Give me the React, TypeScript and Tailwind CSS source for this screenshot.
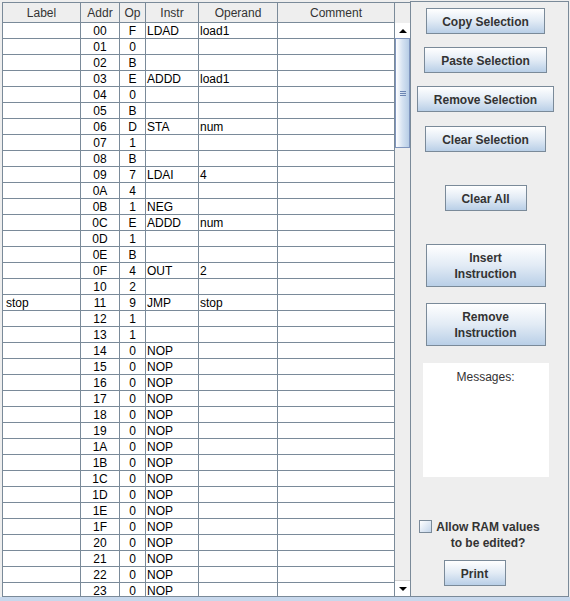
import React from 'react';

type Row = { label?: string; addr: string; op: string; instr?: string; operand?: string };

const rows: Row[] = [
  { addr: '00', op: 'F', instr: 'LDAD', operand: 'load1' },
  { addr: '01', op: '0' },
  { addr: '02', op: 'B' },
  { addr: '03', op: 'E', instr: 'ADDD', operand: 'load1' },
  { addr: '04', op: '0' },
  { addr: '05', op: 'B' },
  { addr: '06', op: 'D', instr: 'STA', operand: 'num' },
  { addr: '07', op: '1' },
  { addr: '08', op: 'B' },
  { addr: '09', op: '7', instr: 'LDAI', operand: '4' },
  { addr: '0A', op: '4' },
  { addr: '0B', op: '1', instr: 'NEG' },
  { addr: '0C', op: 'E', instr: 'ADDD', operand: 'num' },
  { addr: '0D', op: '1' },
  { addr: '0E', op: 'B' },
  { addr: '0F', op: '4', instr: 'OUT', operand: '2' },
  { addr: '10', op: '2' },
  { label: 'stop', addr: '11', op: '9', instr: 'JMP', operand: 'stop' },
  { addr: '12', op: '1' },
  { addr: '13', op: '1' },
  ...Array.from({ length: 16 }, (_, i) => ({
    addr: (0x14 + i).toString(16).toUpperCase(),
    op: '0',
    instr: 'NOP',
  })),
];

const cell = 'h-[16px] border-r border-b border-[#7a8a99] leading-[17px] whitespace-nowrap overflow-hidden';

function Btn({ w, children, tall }: { w: string; children: React.ReactNode; tall?: boolean }) {
  return (
    <button
      className={`${w} ${tall ? 'h-[43px] leading-[16px] pt-[1px]' : 'h-[26px] pt-[1px]'} border border-[#7a8a99] bg-linear-to-b from-white via-[#e2ebf5] to-[#b9cfe7] text-[12px] font-bold text-[#333333] text-center`}
    >
      {children}
    </button>
  );
}

function Arrow({ up }: { up?: boolean }) {
  return (
    <svg width="8" height="4" viewBox="0 0 8 4">
      {up ? <polygon points="0,4 8,4 4,0" fill="#000" /> : <polygon points="0,0 8,0 4,4" fill="#000" />}
    </svg>
  );
}

export default function App() {
  return (
    <div
      className="w-[570px] h-[601px] bg-[#eeeeee] flex flex-col overflow-hidden text-black"
      style={{ fontFamily: '"Liberation Sans", Arial, sans-serif' }}
    >
      <div className="flex h-[597px] pt-[1px] pl-[2px]">
        {/* table pane */}
        <div className="w-[408px] mt-[1px] border-l border-t border-b border-[#7a8a99] flex bg-white">
          <div className="w-[392px] flex flex-col">
            <div className="flex h-[20px] bg-[#eeeeee] text-[12px] text-[#333333] shrink-0">
              {[
                ['Label', 'w-[78px]'],
                ['Addr', 'w-[39px]'],
                ['Op', 'w-[26px]'],
                ['Instr', 'w-[53px]'],
                ['Operand', 'w-[79px]'],
                ['Comment', 'w-[117px]'],
              ].map(([t, w]) => (
                <div key={t} className={`${w} border-r border-b border-[#7a8a99] text-center leading-[21px]`}>
                  {t}
                </div>
              ))}
            </div>
            <div className="flex-1 overflow-hidden text-[12px]">
              {rows.map((r) => (
                <div key={r.addr} className="flex">
                  <div className={`${cell} w-[78px] pl-[3px]`}>{r.label}</div>
                  <div className={`${cell} w-[39px] text-center`}>{r.addr}</div>
                  <div className={`${cell} w-[26px] text-center`}>{r.op}</div>
                  <div className={`${cell} w-[53px] pl-[1px]`}>{r.instr}</div>
                  <div className={`${cell} w-[79px] pl-[1px]`}>{r.operand}</div>
                  <div className={`${cell} w-[117px]`}></div>
                </div>
              ))}
            </div>
          </div>
          {/* scrollbar */}
          <div className="w-[15px] flex flex-col bg-[#eeeeee]">
            <div className="h-[20px] border-b border-[#eeeeee] shrink-0" />
            <div className="h-[15px] bg-white flex items-center justify-center shrink-0">
              <Arrow up />
            </div>
            <div className="h-[110px] border border-[#7f95bd] bg-linear-to-r from-white via-[#d5e2f1] to-[#b7cde6] flex flex-col items-center justify-center gap-[1px] shrink-0">
              <div className="w-[6px] h-[1px] bg-[#6d86b3]" />
              <div className="w-[6px] h-[1px] bg-[#6d86b3]" />
              <div className="w-[6px] h-[1px] bg-[#6d86b3]" />
            </div>
            <div className="flex-1" />
            <div className="h-[16px] bg-white border-t border-[#d0d0d0] flex items-center justify-center shrink-0">
              <Arrow />
            </div>
          </div>
        </div>
        {/* right panel */}
        <div className="w-[159px] h-[596px] border border-[#7a8a99] flex flex-col items-center pr-[8px]">
          <div className="mt-[6px]">
            <Btn w="w-[119px]">Copy Selection</Btn>
          </div>
          <div className="mt-[13px]">
            <Btn w="w-[123px]">Paste Selection</Btn>
          </div>
          <div className="mt-[13px]">
            <Btn w="w-[137px]">Remove Selection</Btn>
          </div>
          <div className="mt-[14px]">
            <Btn w="w-[121px]">Clear Selection</Btn>
          </div>
          <div className="mt-[33px]">
            <Btn w="w-[82px]">Clear All</Btn>
          </div>
          <div className="mt-[33px]">
            <Btn w="w-[120px]" tall>
              Insert
              <br />
              Instruction
            </Btn>
          </div>
          <div className="mt-[16px]">
            <Btn w="w-[120px]" tall>
              Remove
              <br />
              Instruction
            </Btn>
          </div>
          <div className="mt-[17px] w-[126px] h-[114px] bg-white text-center text-[12px] text-[#333333] pt-[5px]">
            Messages:
          </div>
          <div className="mt-[42px] flex items-start gap-[4px] mr-[12px]">
            <div className="w-[13px] h-[13px] mt-[1px] border border-[#7a8a99] bg-linear-to-br from-white to-[#c3d5ea]" />
            <div className="text-[12px] font-bold text-[#333333] text-center leading-[16px]">
              Allow RAM values
              <br />
              to be edited?
            </div>
          </div>
          <div className="mt-[9px] mr-[22px]">
            <Btn w="w-[62px]">Print</Btn>
          </div>
        </div>
      </div>
      <div className="h-[4px] bg-[#c8d8ec]" />
    </div>
  );
}
